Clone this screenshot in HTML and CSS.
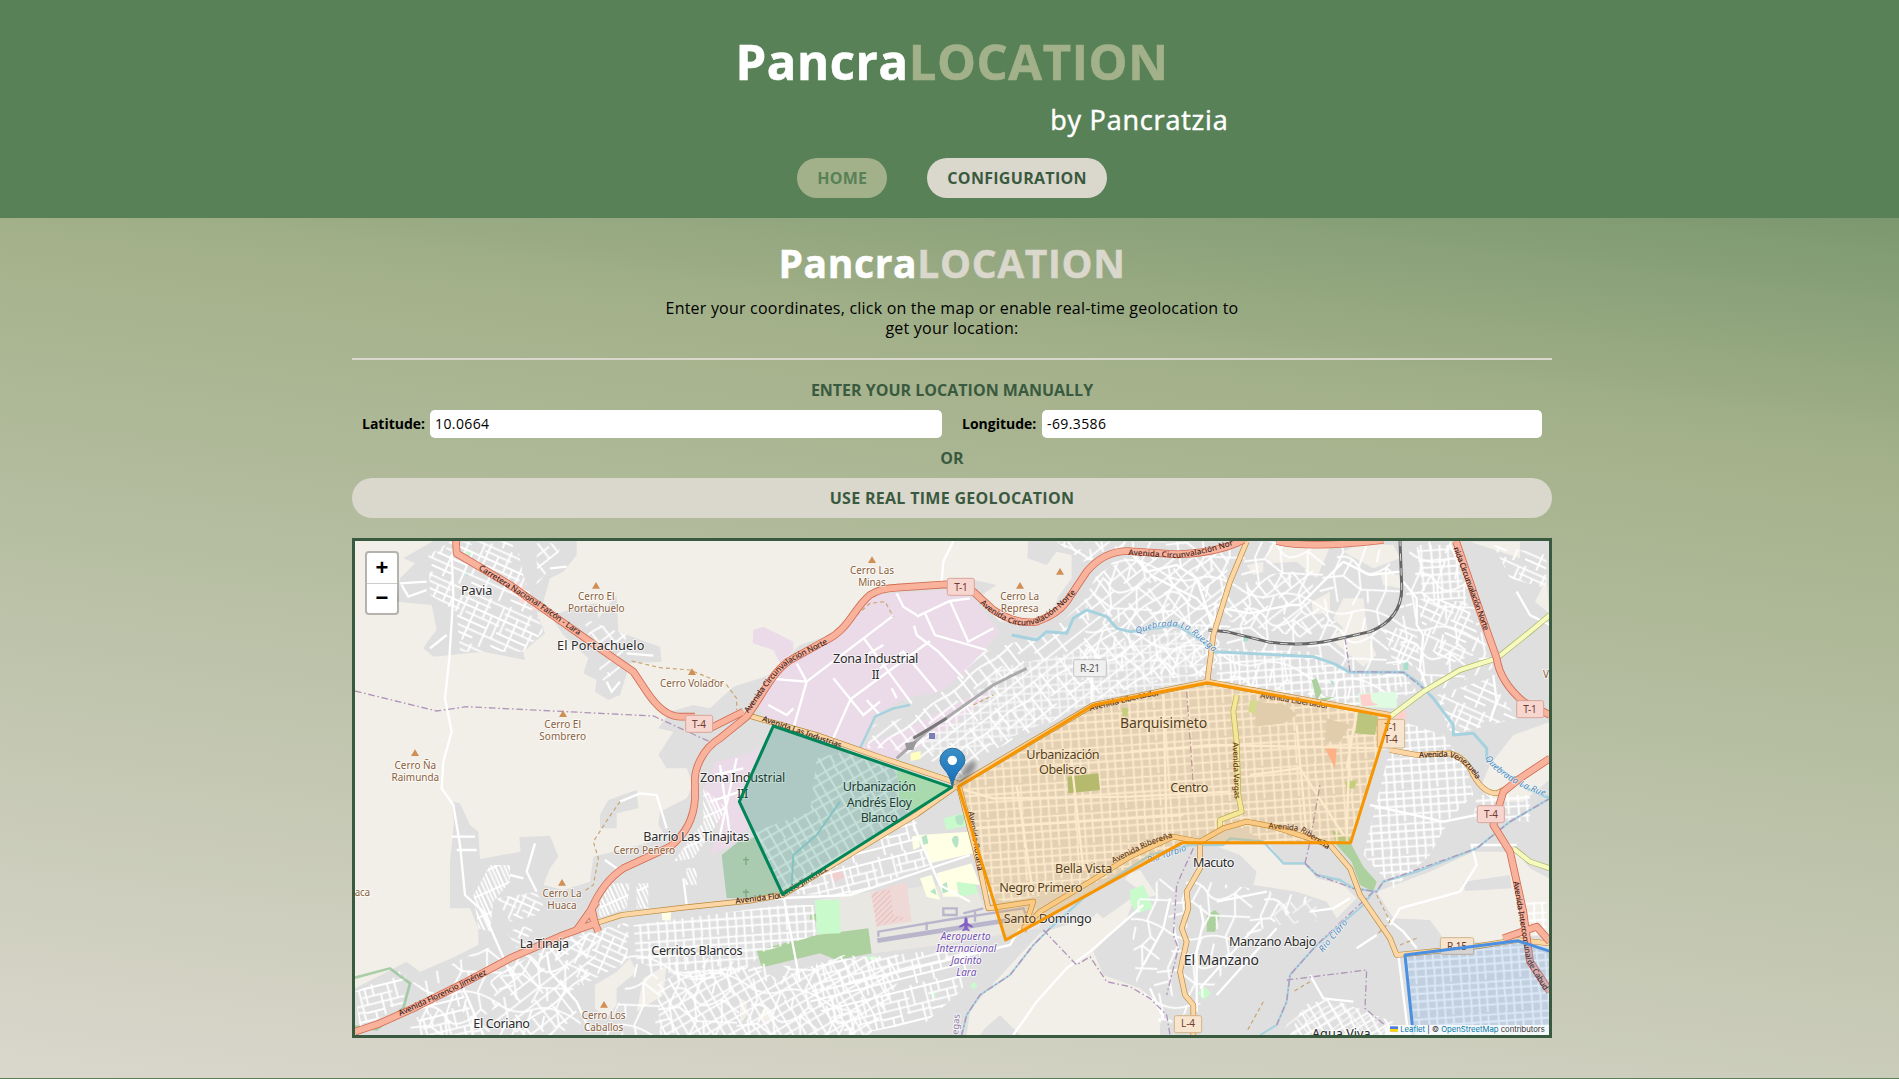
FILE: index.html
```html
<!DOCTYPE html>
<html lang="en">
<head>
<meta charset="utf-8">
<title>PancraLOCATION</title>
<link rel="stylesheet" href="styles.css">
</head>
<body>
<header class="header">
  <h1 class="brand">Pancra<span>LOCATION</span></h1>
  <p class="byline">by Pancratzia</p>
  <nav class="nav"><a class="pill active">HOME</a><a class="pill">CONFIGURATION</a></nav>
</header>
<main class="main">
  <h2 class="title">Pancra<span>LOCATION</span></h2>
  <p class="intro">Enter your coordinates, click on the map or enable real-time geolocation to<br>get your location:</p>
  <hr class="rule">
  <p class="caption">ENTER YOUR LOCATION MANUALLY</p>
  <form class="fields">
    <div class="field lat"><label for="lat">Latitude:</label><input id="lat" value="10.0664"></div>
    <div class="field lon"><label for="lon">Longitude:</label><input id="lon" value="-69.3586"></div>
  </form>
  <p class="caption or">OR</p>
  <button class="geo">USE REAL TIME GEOLOCATION</button>
  <div class="map">
<svg class="tiles" viewBox="15 18 3582 1482" preserveAspectRatio="none">
<defs>
  <pattern id="s1" width="150" height="132" patternUnits="userSpaceOnUse" patternTransform="rotate(-14)"><path class="st" d="M0,12H150M0,38H92M0,61H150M0,84H60M75,80H150M0,108H150M12,12V61M35,0V38M57,38V108M82,12V84M104,0V61M126,61V132M30,84V132M145,0V108"/></pattern>
  <pattern id="s2" width="130" height="150" patternUnits="userSpaceOnUse" patternTransform="rotate(24)"><path class="st" d="M0,10H130M0,28H85M0,48H130M20,68H130M0,90H95M0,112H130M0,132H70M10,0V90M44,28V150M75,0V68M98,48V150M122,10V112"/></pattern>
  <pattern id="s3" width="170" height="160" patternUnits="userSpaceOnUse" patternTransform="rotate(-38)"><path class="st" d="M0,10H170M0,40Q40,30 80,40T170,40M0,75H110M40,104H170M0,138H170M15,0V75M50,40V138M88,0V104M120,40V160M155,10V104"/></pattern>
  <pattern id="s4" width="104" height="98" patternUnits="userSpaceOnUse" patternTransform="rotate(-4)"><path class="st" d="M0,8H104M0,29H104M0,52H104M0,76H104M8,0V98M32,0V52M34,52V98M58,0V98M82,8V98"/></pattern>
  <pattern id="s5" width="120" height="60" patternUnits="userSpaceOnUse" patternTransform="rotate(-30)"><path class="st" d="M0,8H120M0,32H120M10,0V60M42,0V60M72,0V32M76,32V60M104,0V60"/></pattern>
  <pattern id="s6" width="60" height="36" patternUnits="userSpaceOnUse" patternTransform="rotate(66)"><path class="st" d="M0,6H60M0,17H60M0,28H60M6,0V36"/></pattern>
  <pattern id="s7" width="240" height="210" patternUnits="userSpaceOnUse" patternTransform="rotate(12)"><path class="st" d="M0,20Q60,50 110,20T240,20M30,80Q70,60 100,95T180,80L240,110M0,150L60,130L120,160L240,140M20,0L45,60L30,130L60,210M110,20L100,95L120,160L105,210M180,0L200,50L180,80L195,145L180,210M60,130L75,80M150,30V70M140,155L150,195M220,60L200,50M0,190L40,170"/></pattern>
  <pattern id="hatch" width="12" height="12" patternUnits="userSpaceOnUse" patternTransform="rotate(45)"><path d="M2,0V12" stroke="#e2a8a6" stroke-width="2"/></pattern>
  <linearGradient id="pin" x2="0" y2="1"><stop stop-color="#3a8fc6"/><stop offset="1" stop-color="#156cbb"/></linearGradient>
  <filter id="soft"><feGaussianBlur stdDeviation="7"/></filter>
</defs>
<rect x="0" y="0" width="3620" height="1520" fill="#f2efe9"/>

<!-- residential land -->
<g class="res">
  <path d="M3610,0H2035L2032,70L2090,90L2120,50L2165,60V130L2125,185L2100,250L1950,260L1880,190L1940,150L1850,130L1780,150L1600,175L1540,200L1440,300L1350,330L1260,420L1150,455L1080,520L1030,510L960,530L925,580L970,590L925,660L950,700L1010,700L1030,750L1010,790L930,830L925,870L950,910L730,965L720,1040L640,1065L580,1050L600,1000L625,965L600,902L508,907L512,950L390,972L385,890L360,870L330,805L305,800L312,860L300,980L300,1120L360,1120L385,1180V1230L300,1272L210,1310L170,1280L15,1360V1510H3610Z"/>
  <path d="M250,18H680L680,60L640,110L600,130L580,200L610,240L700,210L740,205L745,250L800,180L805,290L930,335L935,380L840,385L810,480L775,495L735,470L740,435L700,415L715,370L640,300L600,240L560,230L585,295L520,350L525,375L400,350L250,365L220,340L240,310L260,285L245,210L140,200L150,130L195,85L160,70Z"/>
  <path d="M750,840L775,795L860,765L865,820L800,835L800,880H750Z"/>
</g>
<g fill="#f2efe9">
  <g transform="translate(1170 750)"><path d="M720,640L830,520L900,445L1060,395L1170,265L1200,255L1250,330L1180,350L1160,400L1060,500L1090,570L1200,610L1260,660V750H680L690,680Z"/><path d="M0,640L20,650V690L0,720ZM70,670L100,685L85,720L60,700Z"/></g>
  <g transform="translate(2340 750)"><path d="M250,180H420L460,240H530L560,280L640,300L680,340L620,400L590,350L500,320L370,300L380,260L330,210ZM740,320L900,260L1030,200L1160,200L1200,250L1257,280V450L1180,455L1130,480L940,460L900,405L790,400Z"/></g>
  <g transform="translate(2340 0)"><path d="M420,30L600,35L560,130L500,80L410,85ZM350,90L400,80V110L370,120ZM640,190L700,190L715,310L740,360L700,395L600,310L640,280L610,250ZM545,200L600,170V230L550,240ZM750,110L810,120V160L760,150ZM640,50L690,25L790,30L810,70L730,100ZM1020,20H1170V70ZM1250,130L1215,200L1257,235ZM1150,600L1275,555V720L1180,800H1090L1050,760L1080,690Z"/></g>
  <path d="M735,1350L800,1310L840,1270L860,1310L800,1360L800,1410L770,1450L735,1420ZM880,1330L950,1290L940,1380L860,1430Z"/>
</g>
<g fill="#dfdfdf"><path d="M2225,1120L2320,1030L2360,1060L2345,1090L2260,1150ZM3340,1040L3480,1020L3485,1060L3345,1068ZM1905,1480L1950,1440L2010,1500H1890Z"/></g>

<!-- land use -->
<g fill="#ebdbe8">
  <path d="M1620,175L1790,165L1870,190L1950,290L1890,360L1860,400L1770,470L1670,490L1570,540L1530,640L1470,620L1250,560L1220,500L1330,370L1450,300L1510,240L1570,180Z"/>
  <path d="M1210,285L1240,275L1330,320V350L1290,385L1270,345L1208,325Z"/>
  <path d="M1520,640L1650,590L1870,480L1930,470L1770,600L1650,670L1590,675Z"/>
  <path d="M1095,680L1200,655L1280,600L1180,790L1215,850L1150,930L1080,960L1110,870L1060,770Z"/>
</g>
<path d="M1115,960L1165,920L1220,905L1305,1075L1290,1085L1130,1090Z" fill="#aacbaf"/>
<g transform="translate(1170 750)">
  <path d="M225,345L395,320L700,290L740,380L890,370L900,430L600,480L400,505L230,450Z" fill="#e9e7e2"/>
  <path d="M393,325L450,305L500,290L515,410L410,425Z" fill="#efd9d7"/><path d="M393,325L450,310L460,390L500,400L410,425Z" fill="url(#hatch)"/><path d="M250,255L300,255L315,275L285,290Z" fill="#efd0cf"/>
  <path d="M50,495L230,450L385,430L395,505L290,525L240,505L65,548ZM210,390L230,385V410L210,405Z" fill="#add19e"/>
  <path d="M225,345H298L302,445L232,447ZM610,100L670,85L690,120L620,135ZM650,290L700,285L715,325L660,335ZM380,515L405,510V525H380ZM690,600L705,590L712,605L700,612ZM570,625L585,620L590,640Z" fill="#c8facc"/>
  <path d="M535,150L690,140L700,205L570,235ZM590,265L695,235L720,300L650,290L655,335L610,335ZM540,280L575,270L600,345L560,335ZM515,155L535,150L540,185L520,195Z" fill="#ffffe5"/>
  <g fill="#b5e3c5"><path d="M545,155L560,150L565,175L550,180ZM640,155Q660,145 655,175T635,165ZM605,300L620,290L625,320L608,325ZM645,95Q675,80 672,105T650,115ZM570,320L585,310L590,330Z"/></g>
  <path d="M412,467L840,400" stroke="#b9b6cc" stroke-width="14"/><path d="M415,455V440L620,405L850,370L860,395M560,410V435M705,380V410M610,390H650V370H610ZM670,385L730,370" stroke="#b9b6cc" stroke-width="7" fill="none"/>
</g>
<g transform="translate(2340 750)"><path d="M0,315L40,300L70,370L20,385L0,350ZM203,625L225,605L243,625L222,645Z" fill="#c8facc"/><path d="M230,390L255,375L270,390L255,440H230ZM605,135L660,160L665,180L700,245L740,290L730,320L690,300L665,230L620,180Z" fill="#add19e"/></g>
<path d="M1270,573L1805,757L1298,1078L1168,800Z" fill="#dadade"/>
<path d="M1640,705L1800,757L1690,830L1650,800Z" fill="#d3efc2"/>
<path d="M350,40L370,50L365,60L345,55Z" fill="#c8facc"/><path d="M345,108L358,112L350,125ZM350,18L365,22L360,35Z" fill="#aae0cb"/><path d="M505,135L520,150L525,205L508,205ZM540,200L575,225L545,225Z" fill="#f9dcd9"/><path d="M935,1130L963,1132L962,1157L937,1155Z" fill="#ffffe5"/>

<!-- street grids -->
<path fill="url(#s2)" d="M235,60L300,20H500L520,120L580,290L520,350L330,350L320,230L240,180Z"/>
<path fill="url(#s3)" d="M560,25H640L600,100L560,150Z M700,250L830,300L810,400L760,440Z"/>
<path fill="url(#s6)" d="M370,1080L420,990L480,990L480,1040L430,1100L420,1190L385,1180Z M750,1100L780,1045L840,1045L830,1120L745,1150Z M860,1045H895V1120H860Z"/>
<path fill="url(#s2)" d="M440,1090L560,1070L580,1110L560,1140L480,1160Z M470,1190L540,1170L560,1220L500,1240Z"/>
<path fill="url(#s1)" d="M15,1370L170,1300L160,1410L30,1480Z M180,1420L330,1360L400,1500H230Z"/>
<path fill="url(#s7)" d="M190,1340L300,1290L400,1240L640,1220L700,1500H180Z"/>
<path fill="url(#s3)" d="M420,1320L600,1240L700,1180L760,1200L720,1320L640,1390L700,1450L550,1500L430,1480Z"/>
<path fill="url(#s2)" d="M600,1230L760,1180L840,1160L830,1280L700,1350Z"/>
<path fill="url(#s5)" d="M920,1350L990,1310L1200,1290L1280,1330L1480,1260L1620,1270L1650,1330L1560,1500H930Z"/>
<path fill="url(#s7)" d="M820,1250L1400,1300L1560,1500H760L830,1350Z"/>
<path fill="url(#s4)" d="M850,1170L1300,1110L1390,1110L1400,1200L1240,1250L1180,1310L1040,1340L860,1280Z"/>
<path fill="url(#s1)" d="M1400,1280L1630,1260L1900,1230L1880,1300L1830,1370L1730,1460L1500,1500L1380,1400Z"/>
<path fill="url(#s1)" d="M1300,1078L1700,840L1700,890L1740,990L1500,1080Z"/>
<path fill="url(#s6)" d="M1060,760L1130,820L1080,900L1030,970L970,980L1060,860ZM1010,1000L1040,1000V1050H1005Z"/>
<path fill="url(#s5)" opacity=".85" d="M1400,670L1480,650L1640,705L1650,800L1690,830L1298,1075L1215,890L1380,830Z"/>
<path fill="url(#s3)" d="M1900,350L2100,290L2200,200L2240,120L2340,60L2640,40L2600,400L2340,460L2230,500L1900,660L1830,740L1780,690L1620,640L1550,640L1570,570L1700,540L1850,400Z"/>
<path fill="url(#s4)" opacity=".7" d="M1940,400L2560,270L2560,430L2230,500L2000,600L1800,680L1690,620L1860,490Z"/>
<path fill="url(#s7)" d="M2120,20H2780L3100,30L3160,200L3200,480L2980,500L2600,430L2200,400L2210,200L2300,60L2200,80ZM3180,20H3310L3430,400L3230,480L3160,300Z"/>
<path fill="url(#s3)" d="M2620,200L2750,120L2900,100L2880,200L2960,260L2860,310L2640,260ZM2120,20H2330L2300,50L2200,80Z"/>
<path fill="url(#s4)" d="M2600,340L2880,350L3000,410L3160,410L3200,470L3000,540L2600,440ZM3200,30H3310L3350,190L3220,200Z"/>
<path fill="url(#s2)" d="M3200,190L3350,200L3400,350L3290,390L3230,330ZM3100,270L3200,290L3210,380L3130,390ZM3260,480L3420,430L3500,550L3300,600ZM3430,30L3590,60L3590,160L3480,130Z"/>
<path fill="url(#s4)" d="M3160,560L3280,600L3350,700L3370,780L3300,850L3240,960L3130,1060L3040,960L3120,640ZM3380,780H3540V860L3370,850ZM3520,1100H3590V1200H3520Z"/>
<path fill="url(#s7)" d="M2340,1120L2440,1020L2700,1060L2900,1090L2740,1180L2640,1280L2560,1400L2440,1480L2360,1350Z"/>
<path fill="url(#s3)" opacity=".6" d="M2760,1110L2900,1090V1160L2780,1170ZM2820,1430L3000,1400L3150,1500H2800Z"/>
<path fill="url(#s5)" d="M2860,1410L2940,1390L3130,1460V1500H2820Z"/>
<path fill="url(#s4)" d="M3170,1265L3500,1220L3600,1260V1500H3195Z"/>
<path fill="url(#s4)" d="M2230,510L2572,443L3120,545L3002,923H2750L2660,870L2497,923L2200,1060L1967,1100L1900,1080L1825,755Z"/>

<!-- parks and plazas in the centre -->
<g transform="translate(2340 0)">
  <path d="M685,475L800,470V520L690,515Z" fill="#dffce2"/><path d="M800,530L825,520L830,550L790,555ZM690,480L720,475L725,500L745,510L695,515Z" fill="#ffd0cd"/>
  <path d="M685,530L745,545L735,600L675,595ZM545,435L560,430L575,470L560,500ZM570,490L615,485L580,500Z" fill="#add19e"/><path d="M360,495L395,500L385,540L355,530Z" fill="#cdebb0"/><path d="M380,500L470,510L500,540L460,565L375,575ZM590,550L660,570L630,620H585Z" fill="#dcdad6"/><path d="M580,630L620,640L615,700Z" fill="#ffb8a5"/>
  <path d="M820,385L835,380V405H820ZM340,305L352,303L355,318L340,320ZM600,435L612,440L608,452Z" fill="#aae0cb"/>
</g>
<path d="M2152,725L2245,715L2250,765L2155,775Z" fill="#a6c487"/>
<path d="M2315,518L2335,520L2332,545L2318,542ZM2985,740L3020,735L3015,760L2990,762Z" fill="#b9dc9a"/>

<!-- single streets -->
<g class="st2">
  <path d="M305,60L310,180L298,370L285,490L305,590L280,680L275,760L310,810L330,930L345,1080L400,1130L470,1290L490,1330M150,145L230,140M155,150L175,185L230,165M600,100L650,95M240,340L290,300M830,355L910,362M770,440L785,470L810,440M305,905H375M320,945H380M555,925L530,1010L560,1070M520,1030L480,1020M810,800L870,775L920,780L950,880M765,975L800,1000M1000,1030L1010,1110M590,1250L600,1310L680,1400L720,1490M340,1360L400,1500M1300,1080L1350,1340M1170,1095L1500,1080L1860,960M1690,870L1770,1050L1860,1100M1480,1350L1980,1230L2010,1180M1990,1500L2060,1400L2150,1300L2220,1250L2380,1110"/>
  <path d="M1810,18L1780,80L1775,140M1250,430L1370,440M1340,385L1370,440L1330,580M1370,440L1630,242M1540,308L1685,505M1700,245L1800,198L1860,190M1725,235L1755,300L1910,345M1800,198L1855,320L1930,280M1450,430L1540,540L1590,500M1502,492L1740,318M1692,272L1700,300L1765,350L1840,430M1550,360L1600,330M1590,400L1660,350L1760,470M1445,620L1502,492M1550,495L1590,540M1625,460L1640,490M1640,175L1660,215L1700,240M1255,510L1310,540L1330,520M1095,720L1180,700M1080,800L1170,770M1110,690L1140,900M1160,670L1110,900M2225,430V510"/>
  <path d="M2400,120L2540,190L2600,260M2620,220L2700,235L2820,210L2850,210L2980,80M2980,80L3060,120L3150,110M3160,140L3200,190V270L3220,300L3210,400L3230,460M2340,50L2390,110L2480,90L2540,130L2590,280M3300,30L3330,90M3500,170L3540,240L3600,270M3430,420L3440,500L3420,560"/>
  <path d="M2340,650L2590,630L3110,640M1825,760L1930,790L2340,785L2640,770M2990,700L3020,530M3000,600L2990,900M2840,570L2870,900M2440,480L2450,900M1860,880L2500,840M2700,720L2850,700L2980,900M2000,750L2050,1080M2160,640L2200,1000"/>
  <path d="M3060,810L3280,860L3380,840M3120,1170L3150,1120L3330,1070L3380,990L3365,930L3500,930M2460,1090L2440,1180L2380,1290M2550,1110L2560,1160L2540,1250V1430M2880,1130L2950,1120L3000,1090M2880,1320L2920,1390L3010,1400M3020,1240L3080,1200M3110,1150L3160,1190L3200,1240M2400,1360L2440,1450M2600,1100L2750,1070M2600,1380L2780,1180M2550,1360L2730,1160M3145,1260L3175,1500"/>
</g>
<g fill="none" stroke="#666" stroke-width="9"><path stroke="#aaa" d="M1640,670L1730,590L1930,450L2030,400"/><path stroke="#777" d="M1690,610L1790,550"/><path d="M2575,285L2630,290L2760,322Q2860,335 2950,315L3060,290Q3160,250 3155,150L3150,18"/><path stroke="#ddd" stroke-width="3" stroke-dasharray="22 22" d="M2575,285L2630,290L2760,322Q2860,335 2950,315L3060,290Q3160,250 3155,150L3150,18"/></g>
<path d="M1665,625L1700,618L1690,645L1670,645Z" fill="#999"/><rect x="1737" y="594" width="18" height="18" fill="#7a80b5"/>
<path d="M1682,655L1712,648V672L1682,678Z" fill="#ffffc0"/>

<!-- water -->
<g fill="none" stroke="#a6d2df" stroke-width="9" stroke-linejoin="round">
  <path d="M1985,300L2060,315L2090,290L2150,295L2170,250L2210,225L2270,245L2300,280L2340,290L2480,270L2560,320L2590,350L2890,365L2950,385L3000,412L3160,412L3200,440L3250,490L3310,570V600L3370,595L3410,640V670L3460,710L3530,760L3600,790"/>
  <path d="M1530,640L1575,545L1630,520L1680,510" stroke-width="7"/><path d="M1470,800L1400,900L1330,960L1325,1050" stroke-width="6"/>
  <path d="M2100,1180L2200,1090L2400,960L2520,930L2620,930L2640,910L2740,920L2800,985H2865L2900,1020L2970,1035L3010,1060L3080,1070L3100,1040L3200,1010L3380,940L3480,860L3600,790" stroke-width="7"/>
  <path d="M2100,1180L2050,1230L1980,1320L1890,1380L1850,1440L1835,1500M3070,1070L3040,1110L2900,1230L2820,1320L2810,1400L2780,1470L2730,1500" stroke-width="6"/>
</g>
<g fill="none" stroke="#b096b8" stroke-width="4" stroke-dasharray="20 8 5 8">
  <path d="M15,468L260,528L350,515L910,543L1090,625"/><path d="M2100,1180L2050,1230L1980,1320L1890,1380L1850,1440L1835,1500M2080,1185L2180,1290L2220,1265L2270,1340L2340,1355L2400,1390L2450,1440L2460,1500M2530,940L2480,1050L2470,1200L2485,1240L2450,1380M2865,985L2880,920L2910,750M2865,985L2900,1020L3010,1060L3080,1070L3100,1040L3380,940L3480,860L3600,790M3070,1070L2900,1230L2820,1320L2810,1400L2780,1470M2810,1335L3050,1305L3045,1420L3140,1500M2985,310L3000,410L3160,412L3220,460M2510,470L2530,750"/>
</g>
<g fill="none" stroke="#c8a46e" stroke-width="3.5" stroke-dasharray="12 9"><path d="M845,378L930,398L1020,405L1130,450L1160,490V525M810,800L775,850L730,920L745,970L730,1050L700,1070M1520,240L1560,205L1605,200L1630,245M3080,1080L3120,1160L3080,1200M3150,1230L3200,1210M2880,1340L2830,1370M2740,1400L2690,1490M1870,510L1930,480"/></g>
<path d="M15,1328L120,1300L180,1345L160,1420L80,1483L15,1475" fill="none" stroke="#8cc08c" stroke-opacity=".7" stroke-width="8"/>

<!-- main roads -->
<g class="road">
  <g class="ycase"><path id="y1" d="M2660,480L2650,530L2660,620L2665,780L2675,830L2610,855V880"/><path id="y2" d="M3120,545L3220,470L3330,405L3440,370L3540,290L3600,240M3490,940L3540,980L3600,1000"/></g><g class="yel"><use href="#y1"/><use href="#y2"/></g>
  <g class="pcase"><path id="p1" d="M745,1162L815,1140L1000,1118L1200,1097L1298,1080L1500,958L1700,838L1825,750L2230,510L2572,440L3120,540"/><path id="p2" d="M1190,540L1400,600L1600,670L1825,745L1890,1000L1915,1120L2050,1100L2020,1190"/><path id="p3" d="M2572,440L2590,300L2640,140L2690,20"/><path id="p4" d="M3120,645L3200,660L3300,655Q3350,670 3370,720Q3400,775 3440,775L3490,750"/><path id="p5" d="M2020,1180L2070,1130L2220,1040L2340,965L2470,905L2550,920L2620,880L2690,860L2770,875L2940,930L3000,1000L3030,1080L3120,1210L3140,1260L3340,1240L3500,1215L3600,1225"/><path id="p6" d="M2550,930V1000L2510,1070L2515,1120L2495,1180L2510,1220L2490,1310L2505,1380L2530,1410V1500"/></g>
  <g class="prim"><use href="#p1"/><use href="#p2"/><use href="#p3"/><use href="#p4"/><use href="#p5"/><use href="#p6"/></g>
  <g class="tcase"><path id="t1" d="M318,18L320,55L480,150L600,235L720,320L850,410L890,470Q940,545 990,545H1035M1080,580L1180,530"/><path id="t2" d="M735,1165L725,1120Q760,1040 820,1000L960,935Q1030,880 1035,790V750C1030,700 1060,640 1110,610L1190,545C1240,480 1270,400 1330,370L1430,315C1500,280 1510,220 1560,180Q1590,160 1640,158L1790,148L1870,170L1930,225Q2000,270 2060,260Q2120,240 2150,200L2210,110Q2260,50 2330,48L2480,58Q2600,55 2680,15"/><path id="t3" d="M15,1490L90,1465L200,1415L350,1340L480,1270L640,1200L735,1165M740,1100L680,1185M725,1140L745,1190"/><path id="t4" d="M3318,18L3380,200L3440,370Q3450,440 3520,500L3600,540M2780,18Q2880,42 3100,15M3600,670L3510,730L3460,770L3430,870L3480,950L3520,1130L3540,1280L3600,1370M3460,1210L3560,1175L3600,1220"/></g>
  <g class="trunk"><use href="#t1"/><use href="#t2"/><use href="#t3"/><use href="#t4"/></g>
</g>

<!-- peaks and shields -->
<path fill="#d08f55" d="M738,141l12,20h-24zM1026,400l12,20h-24zM639,526l12,20h-24zM195,643l12,20h-24zM636,1032l12,20h-24zM762,1398l12,20h-24zM1566,64l12,20h-24zM2010,141l12,20h-24zM2130,99l12,20h-24z"/>
<g class="shield trunk-s"><rect x="1007" y="541" width="81" height="51" rx="6"/><rect x="1792" y="130" width="81" height="51" rx="6"/><rect x="3500" y="497" width="81" height="51" rx="6"/><rect x="3382" y="812" width="81" height="51" rx="6"/></g>
<g class="shield prim-s"><rect x="3082" y="553" width="82" height="86" rx="6"/><rect x="3271" y="1208" width="100" height="50" rx="6"/><rect x="2473" y="1442" width="82" height="51" rx="6"/></g>
<rect x="2171" y="374" width="98" height="51" rx="6" fill="#f0f0f0" stroke="#c5c5c5" stroke-width="3"/>
<g class="lab code"><text x="1047" y="578" textLength="42">T-4</text><text x="1833" y="167" textLength="40">T-1</text><text x="3540" y="534" textLength="40">T-1</text><text x="3423" y="848" textLength="42">T-4</text><text x="2220" y="411" textLength="60" fill="#555">R-21</text><text x="3123" y="588" textLength="38">T-1</text><text x="3123" y="625" textLength="40">T-4</text><text x="3321" y="1246" textLength="60">R-15</text><text x="2514" y="1477" textLength="42">L-4</text></g>

<!-- street names -->
<defs><path id="n1" d="M385,103L560,213L690,305"/><path id="n2" d="M1195,535C1245,465 1285,400 1335,375L1440,322"/><path id="n3" d="M1890,205Q1930,245 1990,268Q2050,278 2090,250Q2130,225 2185,165"/><path id="n4" d="M2335,60L2480,69Q2590,55 2675,20"/><path id="n5" d="M3310,40L3350,145L3405,295"/><path id="n6" d="M1235,558L1480,642"/><path id="n7" d="M2648,622L2654,805"/><path id="n8" d="M2730,488L2940,522"/><path id="n9" d="M3207,668L3290,665Q3350,675 3385,745"/><path id="n10" d="M150,1443L280,1383L415,1315"/><path id="n11" d="M1157,1106L1290,1090L1460,990"/><path id="n12" d="M2290,985L2400,930L2475,905"/><path id="n13" d="M2755,880L2850,888L2935,945"/><path id="n14" d="M3490,1040L3530,1280L3590,1380"/><path id="n15" d="M2220,528L2390,487L2500,473"/><path id="n16" d="M1855,830L1885,1020"/><path id="n17" d="M2360,297Q2480,250 2530,300L2600,360"/><path id="n18" d="M2395,985L2520,943"/><path id="n19" d="M2918,1253L2998,1158"/><path id="n20" d="M3405,670Q3450,740 3590,785"/></defs>
<g class="lab way">
<text><textPath href="#n1" textLength="360">Carretera Nacional Falcón - Lara</textPath></text><text><textPath href="#n2" textLength="325">Avenida Circunvalación Norte</textPath></text><text><textPath href="#n3" textLength="340">Avenida Circunvalación Norte</textPath></text><text><textPath href="#n4" textLength="320">Avenida Circunvalación Nor</textPath></text><text><textPath href="#n5" textLength="265">nida Circunvalación Norte</textPath></text><text><textPath href="#n6" textLength="250">Avenida Las Industrias</textPath></text><text><textPath href="#n7" textLength="170">Avenida Vargas</textPath></text><text><textPath href="#n8" textLength="208">Avenida Libertador</textPath></text><text><textPath href="#n9" textLength="200">Avenida Venezuela</textPath></text><text><textPath href="#n10" textLength="290">Avenida Florencio Jiménez</textPath></text><text><textPath href="#n11" textLength="300">Avenida Florencio Jiménez</textPath></text><text><textPath href="#n12" textLength="195">Avenida Ribereña</textPath></text><text><textPath href="#n13" textLength="195">Avenida Ribereña</textPath></text><text><textPath href="#n14" textLength="345">Avenida Intercomunal de Cabud</textPath></text><text><textPath href="#n15" textLength="215">Avenida Libertador</textPath></text><text><textPath href="#n16" textLength="180">Avenida Rotaria</textPath></text>
</g>
<g class="lab river"><text><textPath href="#n17" textLength="260">Quebrada La Ruezga</textPath></text><text><textPath href="#n18" textLength="122">Río Turbio</textPath></text><text><textPath href="#n19" textLength="118">Río Claro</textPath></text><text><textPath href="#n20" textLength="215">Quebrada La Rue</textPath></text></g>

<!-- place names -->
<g class="lab peak">
<text x="739" y="195" textLength="110">Cerro El</text><text x="739" y="231" textLength="170">Portachuelo</text><text x="1026" y="455" textLength="192">Cerro Volador</text><text x="638" y="579" textLength="110">Cerro El</text><text x="638" y="615" textLength="140">Sombrero</text><text x="196" y="701" textLength="125">Cerro Ña</text><text x="196" y="737" textLength="143">Raimunda</text><text x="1566" y="116" textLength="132">Cerro Las</text><text x="1566" y="152" textLength="83">Minas</text><text x="2009" y="195" textLength="117">Cerro La</text><text x="2009" y="231" textLength="113">Represa</text><text x="883" y="957" textLength="185">Cerro Peñero</text><text x="636" y="1086" textLength="117">Cerro La</text><text x="636" y="1122" textLength="88">Huaca</text><text x="761" y="1451" textLength="132">Cerro Los</text><text x="761" y="1487" textLength="118">Caballos</text><text x="37" y="1084" textLength="46">aca</text><text x="3588" y="430">V</text>
</g>
<g class="lab place">
<text x="380" y="181" textLength="94">Pavia</text><text x="752" y="344" textLength="262">El Portachuelo</text><text x="1577" y="385" textLength="256">Zona Industrial</text><text x="1577" y="431" textLength="24">II</text><text x="1178" y="742" textLength="256">Zona Industrial</text><text x="1178" y="788" textLength="34">III</text><text x="1588" y="769" textLength="220">Urbanización</text><text x="1588" y="815" textLength="196">Andrés Eloy</text><text x="1588" y="861" textLength="112">Blanco</text><text x="2139" y="671" textLength="220">Urbanización</text><text x="2139" y="717" textLength="144">Obelisco</text><text class="big" x="2441" y="579" textLength="262">Barquisimeto</text><text x="2518" y="772" textLength="114">Centro</text><text x="1039" y="919" textLength="318">Barrio Las Tinajitas</text><text x="583" y="1238" textLength="148">La Tinaja</text><text x="1041" y="1259" textLength="274">Cerritos Blancos</text><text x="455" y="1479" textLength="170">El Coriano</text><text x="2201" y="1014" textLength="172">Bella Vista</text><text x="2073" y="1071" textLength="250">Negro Primero</text><text x="2093" y="1163" textLength="264">Santo Domingo</text><text x="2591" y="996" textLength="124">Macuto</text><text x="2768" y="1233" textLength="262">Manzano Abajo</text><text class="big" x="2614" y="1291" textLength="226">El Manzano</text><text x="2974" y="1510" textLength="176">Agua Viva</text>
</g>
<g class="lab air"><path d="M1848,1147q5,0 5,10v6l15,10v5l-15,-5v7l6,5v4l-11,-3l-11,3v-4l6,-5v-7l-15,5v-5l15,-10v-6q0,-10 5,-10z" fill="#8461c4" stroke="none"/><text x="1847" y="1216" textLength="150">Aeropuerto</text><text x="1849" y="1252" textLength="180">Internacional</text><text x="1849" y="1288" textLength="92">Jacinto</text><text x="1849" y="1324" textLength="60">Lara</text></g>
<g fill="#7ba880"><path d="M1186,965h4v7h7v4h-7v14h-4v-14h-7v-4h7zM1186,1062h4v7h7v4h-7v14h-4v-14h-7v-4h7z"/></g>
<text class="lab bound" transform="translate(1825 1500) rotate(-86)">egas</text>

<!-- zones -->
<path d="M1825,755L2230,510L2572,443L3120,545L3002,923H2497L1967,1215Z" fill="#f69500" fill-opacity=".2" stroke="#f69500" stroke-width="9" stroke-linejoin="round"/>
<path d="M1270,573L1805,757L1298,1078L1168,800Z" fill="#008558" fill-opacity=".2" stroke="#008558" stroke-width="9" stroke-linejoin="round"/>
<path d="M3165,1260L3503,1217L3640,1262V1540H3194Z" fill="#4a90e2" fill-opacity=".2" stroke="#4a90e2" stroke-width="9" stroke-linejoin="round"/>
<path d="M1807,757L1850,690Q1885,660 1875,700Q1860,730 1807,757Z" opacity=".35" filter="url(#soft)"/>
<path d="M1807,757Q1800,720 1782,702Q1770,688 1770,677A37,37 0 0 1 1845,677Q1845,688 1832,702Q1813,720 1807,757Z" fill="url(#pin)" stroke="#2e6c97" stroke-width="3"/><circle cx="1807" cy="676" r="14" fill="#fff"/>
</svg>
    <div class="zoom"><a>+</a><a>−</a></div>
    <div class="attribution"><svg width="8" height="6" viewBox="0 0 12 8"><path fill="#4c7be1" d="M0 0h12v4H0z"/><path fill="#ffd500" d="M0 4h12v3H0z"/><path fill="#e0bc00" d="M0 7h12v1H0z"/></svg> <a>Leaflet</a> | © <a>OpenStreetMap</a> contributors</div>
  </div>
</main>
<footer class="footer"></footer>
</body>
</html>
```

FILE: styles.css
```css
* { box-sizing: border-box; }
html { overflow: hidden; }
body {
  margin: 0;
  width: 1904px;
  height: 1079px;
  display: flex;
  flex-direction: column;
  overflow: hidden;
  font: 16px/20px "Open Sans", "Noto Sans", sans-serif;
  background: linear-gradient(187deg, #588157 0%, #a3b18a 35%, #dad7cd 100%);
}
h1, h2, p { margin: 0; }
.header {
  height: 218px;
  flex: none;
  padding-top: 31px;
  display: flex;
  flex-direction: column;
  align-items: center;
  color: #fff;
  background: #588157;
}
.brand { font-size: 49px; line-height: 60px; font-weight: 700; letter-spacing: .6px; -webkit-text-stroke: .6px; }
.brand span { color: #a3b18a; }
.byline { width: 553px; margin-top: 14px; text-align: right; font-size: 27px; line-height: 30px; font-weight: 500; letter-spacing: .8px; -webkit-text-stroke: .5px; }
.nav { display: flex; gap: 40px; margin-top: 23px; }
.pill, .geo {
  height: 40px;
  padding: 10px 20px;
  border: 0;
  border-radius: 20px;
  background: #dad7cd;
  color: #3a5a40;
  font: 700 16px/20px "Open Sans", "Noto Sans", sans-serif;
  letter-spacing: .3px;
}
.pill.active { background: #a3b18a; color: #588157; }
.main { width: 1200px; margin: 0 auto; flex: 1; display: flex; flex-direction: column; text-align: center; }
.title { margin-top: 20px; color: #fff; font-size: 39px; line-height: 50px; font-weight: 700; letter-spacing: .65px; -webkit-text-stroke: .5px; }
.title span { color: #dad7cd; }
.intro { margin-top: 10px; line-height: 20px; letter-spacing: .21px; }
.rule { width: 100%; height: 2px; margin: 20px 0; border: 0; background: #dad7cd; }
.caption { color: #3a5a40; font-weight: 700; }
.fields { display: flex; gap: 20px; padding: 0 10px; margin-top: 10px; }
.field { display: flex; align-items: center; width: 580px; font-size: 14px; font-weight: 700; }
.field label { flex: none; text-align: left; }
.lat label { width: 68px; }
.lon label { width: 80px; }
.field input { flex: 1; min-width: 0; height: 28px; border: 0; border-radius: 5px; padding: 4px 5px 6px; background: #fff; font: 14px/18px "Open Sans", "Noto Sans", sans-serif; letter-spacing: .4px; color: #000; }
.caption.or { margin: 10px 0; }
.geo { width: 100%; }
.map { position: relative; height: 500px; margin-top: 20px; border: 3px solid #3a5a40; overflow: hidden; }
.tiles { display: block; width: 1194px; height: 494px; }
.zoom { position: absolute; left: 10px; top: 10px; width: 34px; border: 2px solid rgba(0,0,0,.25); border-radius: 4px; background: #fff; background-clip: padding-box; }
.zoom a { display: block; height: 29px; font: bold 22px/28px "Liberation Sans", sans-serif; color: #000; }
.zoom a:first-child { height: 31px; line-height: 30px; border-bottom: 1px solid #ccc; }
.attribution { position: absolute; right: 0; bottom: 0; height: 10px; width: 164px; padding: 0 5px; white-space: nowrap; text-align: left; background: rgba(255,255,255,.8); color: #333; font: 7.7px/10px Inter, sans-serif; }
.attribution a { color: #0078a8; }
.footer { height: 1px; background: #588157; }

.st, .st2 { fill: none; stroke: #fff; stroke-width: 5.5; }
.st2 { stroke-width: 7; }
.res { fill: #dfdfdf; }
.road { fill: none; stroke-linejoin: round; }
.ycase { stroke: #a9b464; stroke-width: 17; }
.yel { stroke: #f7fabf; stroke-width: 13; }
.pcase { stroke: #b88a3c; stroke-width: 17; }
.prim { stroke: #fcd6a4; stroke-width: 13; }
.tcase { stroke: #d26d54; stroke-width: 23; }
.trunk { stroke: #f9b29c; stroke-width: 18; }
.shield { stroke-width: 3; }
.trunk-s { fill: #f6d6ce; stroke: #d9a49a; }
.prim-s { fill: #f8e5cf; stroke: #d4b48a; }
.lab { font-family: "Noto Sans", sans-serif; text-anchor: middle; paint-order: stroke; stroke: rgba(255,255,255,.65); stroke-width: 6px; stroke-linejoin: round; }
.code { font-size: 30px; fill: #6e3b33; stroke: none; }
.way { font-size: 24px; font-weight: 500; fill: #42251c; text-anchor: start; stroke: none; }
.river { font-size: 27px; font-style: italic; fill: #4d87bb; text-anchor: start; stroke-width: 4px; }
.peak { font-size: 30px; fill: #8b5f3c; }
.place { font-size: 38px; fill: #2b2b2b; }
.place .big { font-size: 42px; }
.air { font-size: 30px; font-style: italic; fill: #7450b5; }
.bound { font-size: 28px; fill: #957ba2; text-anchor: start; }
```
